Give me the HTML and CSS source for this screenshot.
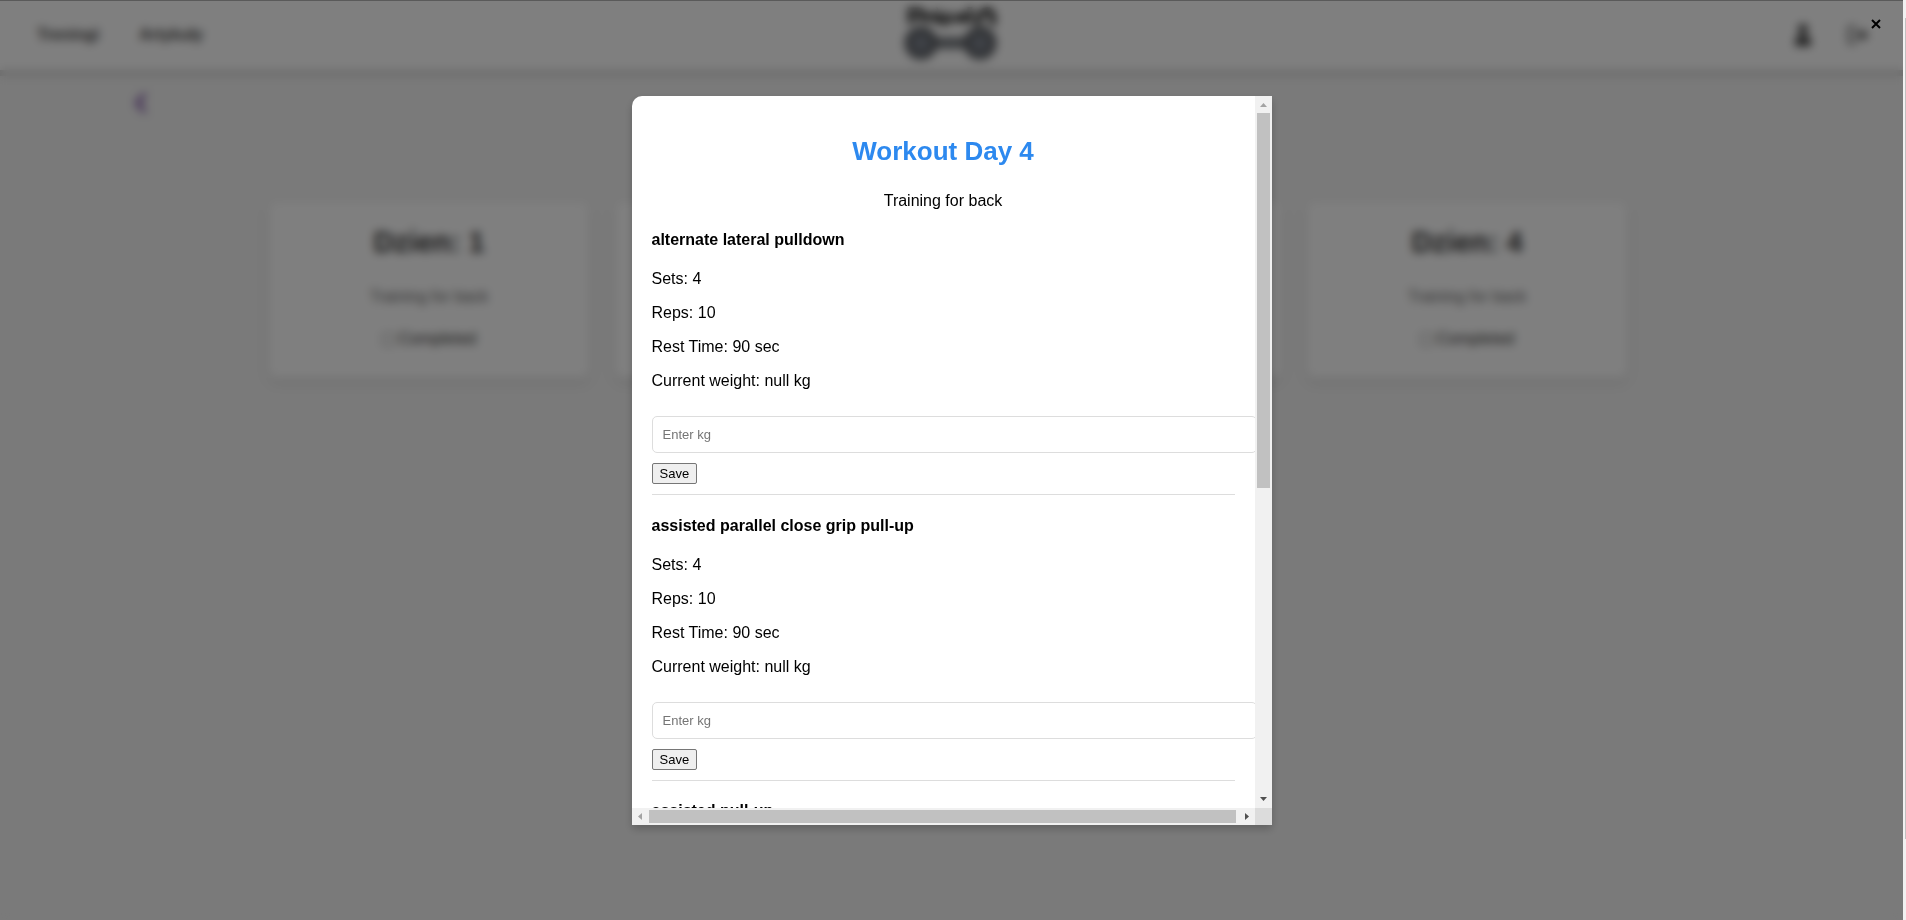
FILE: index.html
```html
<!DOCTYPE html>
<html lang="pl">
<head>
<meta charset="utf-8">
<title>Workout plan</title>
<link rel="stylesheet" href="styles.css">
</head>
<body>
<div class="page">
  <header class="header">
    <nav class="nav">
      <a href="#">Treningi</a>
      <a href="#">Artykuły</a>
    </nav>
    <svg class="logo" viewBox="0 0 100 68" aria-hidden="true">
      <g fill="none" stroke="#444" stroke-width="5">
        <path d="M6 23V9h8q5 0 5 4t-5 4H7M23 22q-3-8 4-8 4 0 4 8M35 22v-8l5 8 4-8 4 8M52 20q0-6 5-6t4 5h-8M66 6v16"/>
        <path d="M75 24q-2-7 3-12 3-3 7-2 6 4 3 14" stroke-width="7"/>
      </g>
      <path d="M30 36h37v12H30z" fill="#777b80"/>
      <circle cx="17" cy="42" r="13" fill="#7e848e" stroke="#5c5f64" stroke-width="7"/>
      <circle cx="76" cy="42" r="13" fill="#7e848e" stroke="#5c5f64" stroke-width="7"/>
    </svg>
    <div class="tools">
      <button class="icon-button" aria-label="Profile">
        <svg width="20" height="24" viewBox="0 0 20 24"><circle cx="10" cy="6" r="5"/><path d="M2 23v-4q0-7 8-7t8 7v4z"/></svg>
      </button>
      <button class="icon-button" aria-label="Log out">
        <svg width="24" height="20" viewBox="0 0 24 20"><path d="M9 2H4q-2 0-2 2v12q0 2 2 2h5" fill="none" stroke="#777" stroke-width="3"/><path d="M8 8h6V4l8 6-8 6v-4H8z" fill="#555"/></svg>
      </button>
    </div>
  </header>
  <main class="main">
    <a class="back" href="#" aria-label="Back">
      <svg width="16" height="24" viewBox="0 0 16 24"><path d="M12 3 4 12l8 9" fill="none" stroke="#551a8b" stroke-width="3"/></svg>
    </a>
    <div class="cards">
      <section class="card"><h2>Dzien: 1</h2><p>Training for back</p><label><input type="checkbox">Completed</label></section>
      <section class="card"><h2>Dzien: 2</h2><p>Training for back</p><label><input type="checkbox">Completed</label></section>
      <section class="card"><h2>Dzien: 3</h2><p>Training for back</p><label><input type="checkbox">Completed</label></section>
      <section class="card"><h2>Dzien: 4</h2><p>Training for back</p><label><input type="checkbox">Completed</label></section>
    </div>
  </main>
</div>
<div class="page-scroll"><div class="page-thumb"></div></div>

<div class="overlay">
  <button class="close" aria-label="Close">
    <svg width="10" height="10" viewBox="0 0 10 10"><path d="m1 1 8 8m0-8-8 8" stroke="#000" stroke-width="2"/></svg>
  </button>
  <div class="modal" role="dialog" aria-labelledby="modal-title">
    <div class="modal-view">
      <h2 class="modal-title" id="modal-title">Workout Day 4</h2>
      <p class="modal-lead">Training for back</p>
      <section class="exercise">
        <h4>alternate lateral pulldown</h4>
        <p>Sets: 4</p>
        <p>Reps: 10</p>
        <p>Rest Time: 90 sec</p>
        <p>Current weight: null kg</p>
        <input class="weight" type="text" placeholder="Enter kg" aria-label="Weight in kg">
        <button class="save">Save</button>
      </section>
      <section class="exercise">
        <h4>assisted parallel close grip pull-up</h4>
        <p>Sets: 4</p>
        <p>Reps: 10</p>
        <p>Rest Time: 90 sec</p>
        <p>Current weight: null kg</p>
        <input class="weight" type="text" placeholder="Enter kg" aria-label="Weight in kg">
        <button class="save">Save</button>
      </section>
      <section class="exercise">
        <h4>assisted pull-up</h4>
      </section>
    </div>
    <div class="bar bar-v">
      <svg width="17" height="17" viewBox="0 0 17 17"><path d="M5 11h7L8.500 7z" fill="#a3a3a3"/></svg>
      <div class="thumb"></div>
      <svg width="17" height="17" viewBox="0 0 17 17"><path d="M5 6h7l-3.500 4z" fill="#505050"/></svg>
    </div>
    <div class="bar bar-h">
      <svg width="17" height="17" viewBox="0 0 17 17"><path d="M10 5v7L6 8.500z" fill="#a3a3a3"/></svg>
      <div class="thumb"></div>
      <svg width="17" height="17" viewBox="0 0 17 17"><path d="M7 5v7l4-3.500z" fill="#505050"/></svg>
    </div>
    <div class="corner"></div>
  </div>
</div>
</body>
</html>
```
FILE: styles.css
```css
* { box-sizing: border-box; }

body {
  margin: 0;
  height: 100vh;
  display: flex;
  overflow: hidden;
  background: #f4f4f4;
  color: #000;
  font: 16px/18px "Liberation Sans", Arial, sans-serif;
}

.page { flex: 1; }

.header {
  display: grid;
  grid-template-columns: 1fr auto 1fr;
  align-items: center;
  height: 76px;
  padding: 0 32px 0 37px;
  border-bottom: 6px solid #d8d8d8;
  background: #fff;
}

.nav { display: flex; gap: 40px; }
.nav a { color: #444; font-weight: bold; text-decoration: none; }

.logo { width: 100px; height: 68px; }

.tools { display: flex; justify-content: flex-end; align-items: center; gap: 34px; }

.icon-button {
  display: flex;
  padding: 0;
  border: 0;
  background: none;
  fill: #444;
}

.main { padding: 15px 7px 0 0; }

.back { display: flex; width: 16px; margin-left: 133px; }

.cards {
  display: flex;
  justify-content: center;
  gap: 26px;
  margin-top: 87px;
}

.card {
  width: 320px;
  padding: 24px 20px 30px;
  border-radius: 8px;
  background: #fff;
  box-shadow: 0 4px 8px rgba(0, 0, 0, 0.1);
  text-align: center;
}

.card h2 { margin: 0 0 30px; color: #333; font-size: 29px; line-height: 32px; }
.card p { margin: 0 0 24px; color: #666; }
.card label { display: flex; justify-content: center; align-items: center; gap: 4px; color: #333; }
.card input { width: 13px; height: 13px; margin: 0; }

.page-scroll { width: 3px; padding: 18px 0 0 2px; background: #f1f1f1; }
.page-thumb { height: 91%; background: #c1c1c1; }

.overlay {
  position: fixed;
  inset: 0 3px 0 0;
  display: flex;
  justify-content: center;
  padding: 95px 0;
  border-top: 1px solid #5a5a5a;
  background: rgba(0, 0, 0, 0.5);
  backdrop-filter: blur(5px);
}

.close {
  position: absolute;
  top: 18px;
  right: 22px;
  display: flex;
  padding: 0;
  border: 0;
  background: none;
}

.modal {
  display: grid;
  grid-template: minmax(0, 1fr) 17px / minmax(0, 1fr) 17px;
  width: 640px;
  max-width: 90%;
  border-radius: 10px 0 0 0;
  background: #fff;
  box-shadow: 0 4px 8px rgba(0, 0, 0, 0.2);
}

.modal-view { overflow: hidden; padding: 20px; }

.modal-title {
  margin: 20px 0 26px;
  color: #2d89ef;
  font-size: 26px;
  line-height: 30px;
  text-align: center;
}

.modal-lead { margin: 0; text-align: center; }

.exercise { padding-bottom: 10px; border-bottom: 1px solid #ddd; }
.exercise h4 { margin: 21px 0; font-size: 16px; }
.exercise + .exercise h4 { margin-top: 22px; }
.exercise:last-child h4 { margin-top: 21px; }
.exercise p { margin: 16px 0; }

.weight {
  display: block;
  width: calc(100% + 22px);
  height: 37px;
  margin: 26px 0 10px;
  padding: 10px;
  border: 1px solid #ddd;
  border-radius: 5px;
  font: 13px/15px "Liberation Sans", Arial, sans-serif;
}

.weight::placeholder { color: #757575; }

.save {
  display: block;
  height: 21px;
  padding: 1px 7px;
  border: 1px solid #767676;
  border-radius: 2px;
  background: #efefef;
  color: #000;
  font: 13px/15px "Liberation Sans", Arial, sans-serif;
}

.bar { display: flex; background: #f1f1f1; }
.bar svg { flex: none; }
.bar .thumb { background: #c1c1c1; }
.bar-v { flex-direction: column; }
.bar-v .thumb { flex: 0 0 375px; margin: 0 2px; }
.bar-v svg:last-child { margin-top: auto; }
.bar-h { grid-row: 2; }
.bar-h .thumb { flex: 1; margin: 2px 2px 2px 0; }
.corner { background: #dcdcdc; }
```
